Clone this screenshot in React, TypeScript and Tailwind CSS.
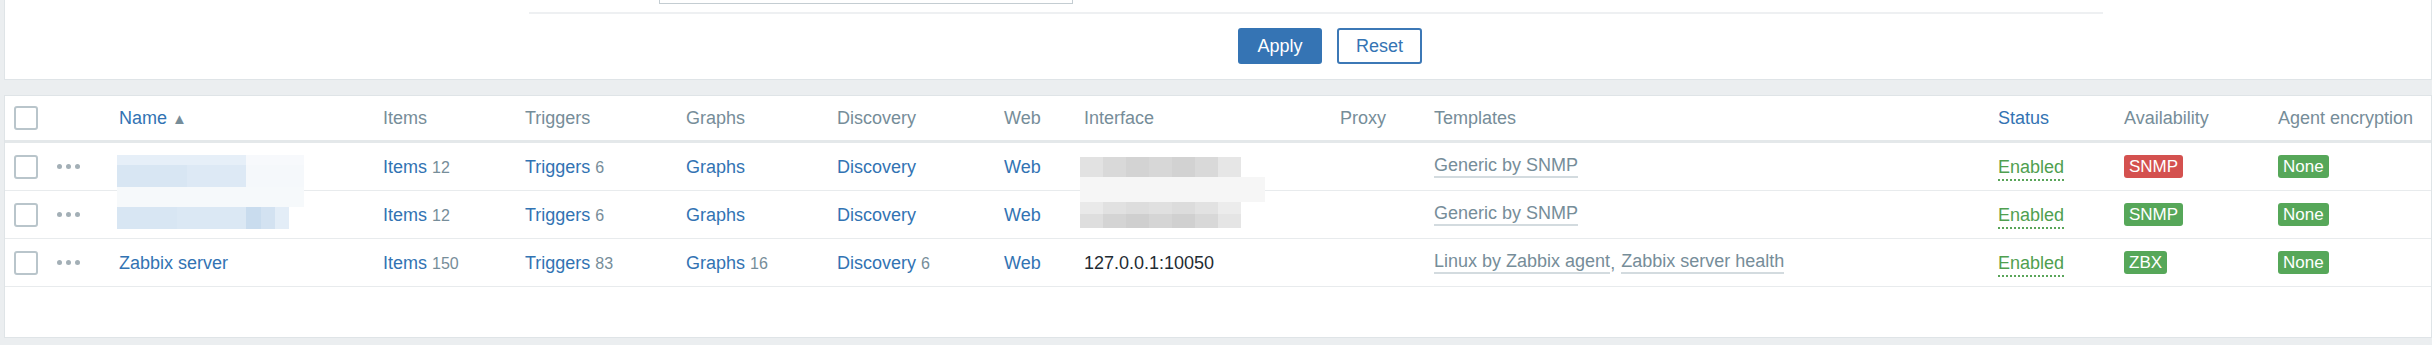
import React from 'react';

type Row = {
  name?: string;
  items: number;
  triggers: number;
  graphs?: number;
  discovery?: number;
  iface?: string;
  templates: string[];
  avail: { label: string; ok: boolean };
};

const rows: Row[] = [
  { items: 12, triggers: 6, templates: ['Generic by SNMP'], avail: { label: 'SNMP', ok: false } },
  { items: 12, triggers: 6, templates: ['Generic by SNMP'], avail: { label: 'SNMP', ok: true } },
  {
    name: 'Zabbix server',
    items: 150,
    triggers: 83,
    graphs: 16,
    discovery: 6,
    iface: '127.0.0.1:10050',
    templates: ['Linux by Zabbix agent', 'Zabbix server health'],
    avail: { label: 'ZBX', ok: true },
  },
];

const link = 'text-[#3273b3]';
const count = 'ml-[5px] text-[16px] text-[#768d99]';

function Checkbox() {
  return <div className="w-[24px] h-[24px] rounded-[3px] border-2 border-[#b9c5cb] bg-white" />;
}

function Dots() {
  return (
    <div className="flex gap-[4px]">
      <span className="w-[5px] h-[5px] rounded-full bg-[#a3afb6]" />
      <span className="w-[5px] h-[5px] rounded-full bg-[#a3afb6]" />
      <span className="w-[5px] h-[5px] rounded-full bg-[#a3afb6]" />
    </div>
  );
}

// pixelated blur blocks standing in for the hidden host names / interfaces
function NameBlur({ second }: { second: boolean }) {
  if (!second)
    return (
      <div className="absolute left-[-2px] top-[12px] z-10 flex flex-col">
        <div className="flex h-[10px]">
          <div className="w-[129px] bg-[#e6eff8]" />
          <div className="w-[58px] bg-[#f7f9fc]" />
        </div>
        <div className="flex h-[22px]">
          <div className="w-[70px] bg-[#d8e6f3]" />
          <div className="w-[59px] bg-[#dde9f5]" />
          <div className="w-[58px] bg-[#f5f8fb]" />
        </div>
      </div>
    );
  return (
    <div className="absolute left-[-2px] top-[-4px] z-10 flex flex-col">
      <div className="flex h-[20px]">
        <div className="w-[187px] bg-[#f6f9fb]" />
      </div>
      <div className="flex h-[22px]">
        <div className="w-[60px] bg-[#d8e6f3]" />
        <div className="w-[69px] bg-[#dbe8f4]" />
        <div className="w-[15px] bg-[#c9dcee]" />
        <div className="w-[14px] bg-[#d3e2f1]" />
        <div className="w-[14px] bg-[#e3edf7]" />
      </div>
    </div>
  );
}

function IfaceBlur({ second }: { second: boolean }) {
  const shades = ['#e2e2e2', '#d9d9d9', '#d3d3d3', '#d7d7d7', '#d2d2d2', '#d9d9d9', '#e6e6e6'];
  const blocks = (
    <div className="flex h-[20px]">
      {shades.map((c, i) => (
        <div key={i} className="w-[23px] h-full" style={{ background: c }} />
      ))}
    </div>
  );
  if (!second)
    return (
      <div className="absolute left-[-4px] top-[14px] z-10 flex flex-col">
        {blocks}
        <div className="h-[14px] w-[185px] bg-[#f6f6f6]" />
      </div>
    );
  return (
    <div className="absolute left-[-4px] top-[-5px] z-10 flex flex-col">
      <div className="h-[16px] w-[185px] bg-[#f6f6f6]" />
      <div className="flex flex-col">
        <div className="flex h-[12px]">
          {['#e9e9e9', '#e1e1e1', '#dddddd', '#e0e0e0', '#dcdcdc', '#e2e2e2', '#ececec'].map((c, i) => (
            <div key={i} className="w-[23px] h-full" style={{ background: c }} />
          ))}
        </div>
        <div className="flex h-[14px]">
          {['#dedede', '#d4d4d4', '#cfcfcf', '#d5d5d5', '#d0d0d0', '#d8d8d8', '#e5e5e5'].map((c, i) => (
            <div key={i} className="w-[23px] h-full" style={{ background: c }} />
          ))}
        </div>
      </div>
    </div>
  );
}

export default function App() {
  return (
    <div className="w-[2432px] h-[345px] overflow-hidden bg-[#ebeef0] font-['Liberation_Sans',Arial,sans-serif] text-[18px] leading-none text-[#1f2c33]">
      {/* Filter panel */}
      <div className="ml-[4px] h-[80px] bg-white border-x border-b border-[#dfe4e7]">
        <div className="ml-[654px] w-[414px] h-[4px] border-x border-b border-[#c4cdd2]" />
        <div className="mt-[8px] ml-[524px] w-[1574px] h-[2px] bg-[#eef0f2]" />
        <div className="mt-[14px] ml-[1233px] flex gap-[15px]">
          <button className="w-[84px] h-[36px] rounded-[3px] bg-[#3574b4] text-white">Apply</button>
          <button className="w-[85px] h-[36px] rounded-[3px] border-2 border-[#3c78b6] bg-white text-[#3574b4]">
            Reset
          </button>
        </div>
      </div>

      {/* Hosts table */}
      <div className="ml-[4px] mt-[15px] h-[243px] bg-white border border-[#dfe4e7]">
        <div className="flex items-center h-[47px] border-b-[3px] border-[#e4e8ea] text-[#768d99]">
          <div className="w-[52px] pl-[9px]">
            <Checkbox />
          </div>
          <div className="w-[62px]" />
          <div className="w-[264px] flex items-center">
            <span className={link}>Name</span>
            <span className="ml-[5px] text-[15px] text-[#768d99]">▲</span>
          </div>
          <div className="w-[142px]">Items</div>
          <div className="w-[161px]">Triggers</div>
          <div className="w-[151px]">Graphs</div>
          <div className="w-[167px]">Discovery</div>
          <div className="w-[80px]">Web</div>
          <div className="w-[256px]">Interface</div>
          <div className="w-[94px]">Proxy</div>
          <div className="w-[564px]">Templates</div>
          <div className={`w-[126px] ${link}`}>Status</div>
          <div className="w-[154px]">Availability</div>
          <div className="flex-1">Agent encryption</div>
        </div>

        {rows.map((r, i) => (
          <div key={i} className="flex items-center h-[48px] border-b border-[#e8ebed]">
            <div className="w-[52px] pl-[9px]">
              <Checkbox />
            </div>
            <div className="w-[62px]">
              <Dots />
            </div>
            <div className="w-[264px] relative self-stretch flex items-center">
              {r.name ? <span className={link}>{r.name}</span> : <NameBlur second={i === 1} />}
            </div>
            <div className="w-[142px]">
              <span className={link}>Items</span>
              <span className={count}>{r.items}</span>
            </div>
            <div className="w-[161px]">
              <span className={link}>Triggers</span>
              <span className={count}>{r.triggers}</span>
            </div>
            <div className="w-[151px]">
              <span className={link}>Graphs</span>
              {r.graphs !== undefined && <span className={count}>{r.graphs}</span>}
            </div>
            <div className="w-[167px]">
              <span className={link}>Discovery</span>
              {r.discovery !== undefined && <span className={count}>{r.discovery}</span>}
            </div>
            <div className="w-[80px]">
              <span className={link}>Web</span>
            </div>
            <div className="w-[256px] relative self-stretch flex items-center">
              {r.iface ? <span>{r.iface}</span> : <IfaceBlur second={i === 1} />}
            </div>
            <div className="w-[94px]" />
            <div className="w-[564px] flex items-center text-[#768d99]">
              {r.templates.map((t, j) => (
                <React.Fragment key={t}>
                  {j > 0 && <span className="mr-[6px]">,</span>}
                  <span className="pb-[2px] border-b-2 border-[#d3dbdf]">{t}</span>
                </React.Fragment>
              ))}
            </div>
            <div className="w-[126px]">
              <span className="pb-[2px] border-b-2 border-dotted border-[#5aa55a] text-[#4f9f50]">Enabled</span>
            </div>
            <div className="w-[154px]">
              <span
                className={`inline-block px-[5px] py-[3px] rounded-[3px] text-white text-[17px] ${
                  r.avail.ok ? 'bg-[#56a759]' : 'bg-[#d4514f]'
                }`}
              >
                {r.avail.label}
              </span>
            </div>
            <div className="flex-1">
              <span className="inline-block px-[5px] py-[3px] rounded-[3px] text-white text-[17px] bg-[#56a759]">
                None
              </span>
            </div>
          </div>
        ))}
      </div>
    </div>
  );
}
